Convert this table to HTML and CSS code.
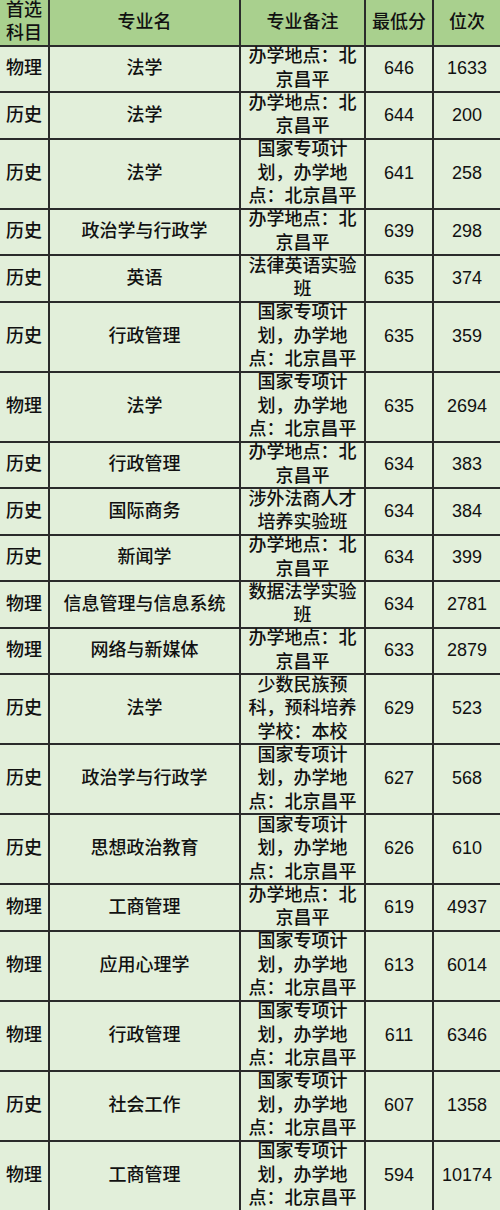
FILE: index.html
```html
<!DOCTYPE html>
<html lang="zh-CN">
<head>
<meta charset="utf-8">
<title>录取分数</title>
<link rel="stylesheet" href="styles.css">
</head>
<body>
<table class="score-table">
  <colgroup>
    <col class="col-subject">
    <col class="col-major">
    <col class="col-note">
    <col class="col-score">
    <col class="col-rank">
  </colgroup>
  <thead>
    <tr><th><div class="c">首选<br>科目</div></th><th><div class="c">专业名</div></th><th><div class="c">专业备注</div></th><th><div class="c">最低分</div></th><th><div class="c">位次</div></th></tr>
  </thead>
  <tbody>
    <tr><td><div class="c">物理</div></td><td><div class="c">法学</div></td><td><div class="c">办学地点：北京昌平</div></td><td><div class="c">646</div></td><td><div class="c">1633</div></td></tr>
    <tr><td><div class="c">历史</div></td><td><div class="c">法学</div></td><td><div class="c">办学地点：北京昌平</div></td><td><div class="c">644</div></td><td><div class="c">200</div></td></tr>
    <tr><td><div class="c">历史</div></td><td><div class="c">法学</div></td><td><div class="c">国家专项计划，办学地点：北京昌平</div></td><td><div class="c">641</div></td><td><div class="c">258</div></td></tr>
    <tr><td><div class="c">历史</div></td><td><div class="c">政治学与行政学</div></td><td><div class="c">办学地点：北京昌平</div></td><td><div class="c">639</div></td><td><div class="c">298</div></td></tr>
    <tr><td><div class="c">历史</div></td><td><div class="c">英语</div></td><td><div class="c">法律英语实验班</div></td><td><div class="c">635</div></td><td><div class="c">374</div></td></tr>
    <tr><td><div class="c">历史</div></td><td><div class="c">行政管理</div></td><td><div class="c">国家专项计划，办学地点：北京昌平</div></td><td><div class="c">635</div></td><td><div class="c">359</div></td></tr>
    <tr><td><div class="c">物理</div></td><td><div class="c">法学</div></td><td><div class="c">国家专项计划，办学地点：北京昌平</div></td><td><div class="c">635</div></td><td><div class="c">2694</div></td></tr>
    <tr><td><div class="c">历史</div></td><td><div class="c">行政管理</div></td><td><div class="c">办学地点：北京昌平</div></td><td><div class="c">634</div></td><td><div class="c">383</div></td></tr>
    <tr><td><div class="c">历史</div></td><td><div class="c">国际商务</div></td><td><div class="c">涉外法商人才培养实验班</div></td><td><div class="c">634</div></td><td><div class="c">384</div></td></tr>
    <tr><td><div class="c">历史</div></td><td><div class="c">新闻学</div></td><td><div class="c">办学地点：北京昌平</div></td><td><div class="c">634</div></td><td><div class="c">399</div></td></tr>
    <tr><td><div class="c">物理</div></td><td><div class="c">信息管理与信息系统</div></td><td><div class="c">数据法学实验班</div></td><td><div class="c">634</div></td><td><div class="c">2781</div></td></tr>
    <tr><td><div class="c">物理</div></td><td><div class="c">网络与新媒体</div></td><td><div class="c">办学地点：北京昌平</div></td><td><div class="c">633</div></td><td><div class="c">2879</div></td></tr>
    <tr><td><div class="c">历史</div></td><td><div class="c">法学</div></td><td><div class="c">少数民族预科，预科培养学校：本校</div></td><td><div class="c">629</div></td><td><div class="c">523</div></td></tr>
    <tr><td><div class="c">历史</div></td><td><div class="c">政治学与行政学</div></td><td><div class="c">国家专项计划，办学地点：北京昌平</div></td><td><div class="c">627</div></td><td><div class="c">568</div></td></tr>
    <tr><td><div class="c">历史</div></td><td><div class="c">思想政治教育</div></td><td><div class="c">国家专项计划，办学地点：北京昌平</div></td><td><div class="c">626</div></td><td><div class="c">610</div></td></tr>
    <tr><td><div class="c">物理</div></td><td><div class="c">工商管理</div></td><td><div class="c">办学地点：北京昌平</div></td><td><div class="c">619</div></td><td><div class="c">4937</div></td></tr>
    <tr><td><div class="c">物理</div></td><td><div class="c">应用心理学</div></td><td><div class="c">国家专项计划，办学地点：北京昌平</div></td><td><div class="c">613</div></td><td><div class="c">6014</div></td></tr>
    <tr><td><div class="c">物理</div></td><td><div class="c">行政管理</div></td><td><div class="c">国家专项计划，办学地点：北京昌平</div></td><td><div class="c">611</div></td><td><div class="c">6346</div></td></tr>
    <tr><td><div class="c">历史</div></td><td><div class="c">社会工作</div></td><td><div class="c">国家专项计划，办学地点：北京昌平</div></td><td><div class="c">607</div></td><td><div class="c">1358</div></td></tr>
    <tr><td><div class="c">物理</div></td><td><div class="c">工商管理</div></td><td><div class="c">国家专项计划，办学地点：北京昌平</div></td><td><div class="c">594</div></td><td><div class="c">10174</div></td></tr>
  </tbody>
</table>
</body>
</html>
```

FILE: styles.css
```css
html, body {
  margin: 0;
  padding: 0;
  background: #e2efda;
}

.score-table {
  width: 500px;
  table-layout: fixed;
  border-collapse: collapse;
  border-style: hidden;
  font-family: "Liberation Sans", "Noto Sans CJK SC", sans-serif;
  font-size: 18px;
  font-weight: 500;
  color: #111;
}

.col-subject { width: 49px; }
.col-major { width: 191px; }
.col-note { width: 125px; }
.col-score { width: 68px; }
.col-rank { width: 67px; }

.score-table th,
.score-table td {
  border: 2px solid #2b2b2b;
  padding: 0 3px;
  text-align: center;
  vertical-align: middle;
  font-weight: 500;
  background: #e2efda;
}

.score-table th {
  background: #a9d08e;
}

.c {
  line-height: 23.5px;
  margin: -1.25px 0;
  word-break: normal;
  line-break: strict;
}
```
